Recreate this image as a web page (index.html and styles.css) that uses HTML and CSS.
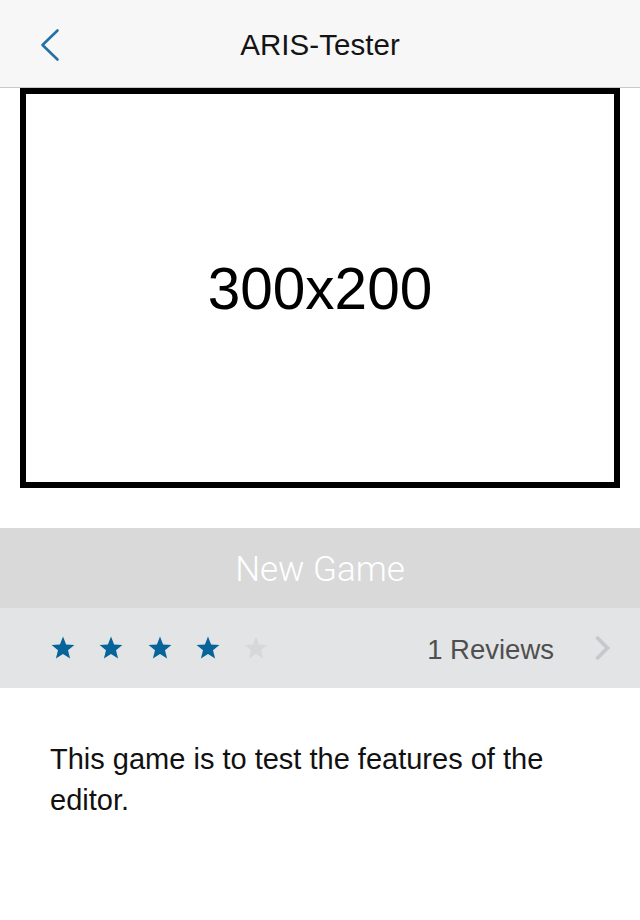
FILE: index.html
```html
<!DOCTYPE html>
<html lang="en">
<head>
<meta charset="utf-8">
<title>ARIS-Tester</title>
<link rel="stylesheet" href="styles.css">
</head>
<body>
<header class="navbar">
  <div class="nav-left">
    <svg class="back-icon" width="24" height="34" viewBox="0 0 24 34" aria-hidden="true">
      <polyline points="21.5,2.5 6.5,17 21.5,31.5" fill="none" stroke="#2371a6" stroke-width="2.6" stroke-linecap="round" stroke-linejoin="round"/>
    </svg>
  </div>
  <h1 class="nav-title">ARIS-Tester</h1>
  <div class="nav-right"></div>
</header>

<section class="media">
  <div class="placeholder">300x200</div>
</section>

<div class="action-bar">New Game</div>

<div class="reviews-bar">
  <div class="stars">
    <svg class="star on" viewBox="0 0 24 24"><polygon points="12,0.4 15.1,8.4 23.4,8.9 17,14.3 19.1,22.4 12,17.9 4.9,22.4 7,14.3 0.6,8.9 8.9,8.4"/></svg>
    <svg class="star on" viewBox="0 0 24 24"><polygon points="12,0.4 15.1,8.4 23.4,8.9 17,14.3 19.1,22.4 12,17.9 4.9,22.4 7,14.3 0.6,8.9 8.9,8.4"/></svg>
    <svg class="star on" viewBox="0 0 24 24"><polygon points="12,0.4 15.1,8.4 23.4,8.9 17,14.3 19.1,22.4 12,17.9 4.9,22.4 7,14.3 0.6,8.9 8.9,8.4"/></svg>
    <svg class="star on" viewBox="0 0 24 24"><polygon points="12,0.4 15.1,8.4 23.4,8.9 17,14.3 19.1,22.4 12,17.9 4.9,22.4 7,14.3 0.6,8.9 8.9,8.4"/></svg>
    <svg class="star off" viewBox="0 0 24 24"><polygon points="12,0.4 15.1,8.4 23.4,8.9 17,14.3 19.1,22.4 12,17.9 4.9,22.4 7,14.3 0.6,8.9 8.9,8.4"/></svg>
  </div>
  <span class="reviews-count">1 Reviews</span>
  <svg class="disclosure" width="18" height="28" viewBox="0 0 18 28" aria-hidden="true">
    <polyline points="3.5,3 14.5,14 3.5,25" fill="none" stroke="#c8c8cc" stroke-width="3.8" stroke-linecap="butt" stroke-linejoin="miter"/>
  </svg>
</div>

<p class="description">This game is to test the features of the editor.</p>
</body>
</html>
```

FILE: styles.css
```css
* {
  box-sizing: border-box;
}

html, body {
  margin: 0;
  padding: 0;
  background: #ffffff;
}

body {
  width: 640px;
  font-family: "Liberation Sans", Arial, sans-serif;
  color: #111111;
}

.navbar {
  height: 88px;
  padding-top: 2px;
  background: #f7f7f7;
  border-bottom: 1px solid #c9c9c9;
  display: grid;
  grid-template-columns: 1fr auto 1fr;
  align-items: center;
}

.nav-left {
  display: flex;
  align-items: center;
  padding-left: 36px;
}

.back-icon {
  display: block;
  margin-top: 1px;
}

.nav-title {
  margin: 0;
  font-size: 29.5px;
  font-weight: normal;
  color: #141414;
  letter-spacing: 0.05px;
}

.media {
  padding: 0 20px;
}

.placeholder {
  width: 600px;
  height: 400px;
  border: 6px solid #000000;
  background: #ffffff;
  display: flex;
  align-items: center;
  justify-content: center;
  font-size: 58.5px;
  color: #000000;
}

.action-bar {
  margin-top: 40px;
  height: 80px;
  background: #d9d9d9;
  color: #ffffff;
  display: flex;
  align-items: center;
  justify-content: center;
  font-family: Roboto, "Liberation Sans", sans-serif;
  font-weight: 300;
  font-size: 35px;
  padding-top: 2px;
}

.reviews-bar {
  height: 80px;
  background: #e3e4e6;
  display: flex;
  align-items: center;
  padding-left: 51px;
  padding-right: 29px;
}

.stars {
  display: flex;
  gap: 24.3px;
  flex: 1;
}

.star {
  width: 24px;
  height: 24px;
  display: block;
}

.star.on {
  fill: #06649a;
}

.star.off {
  fill: #d6d8da;
}

.reviews-count {
  font-size: 27.5px;
  color: #4f4f4f;
  padding-top: 3px;
}

.disclosure {
  display: block;
  margin-left: 39px;
}

.description {
  margin: 0;
  padding: 51px 50px 0 50px;
  font-size: 29px;
  line-height: 41px;
  color: #111111;
}
```
